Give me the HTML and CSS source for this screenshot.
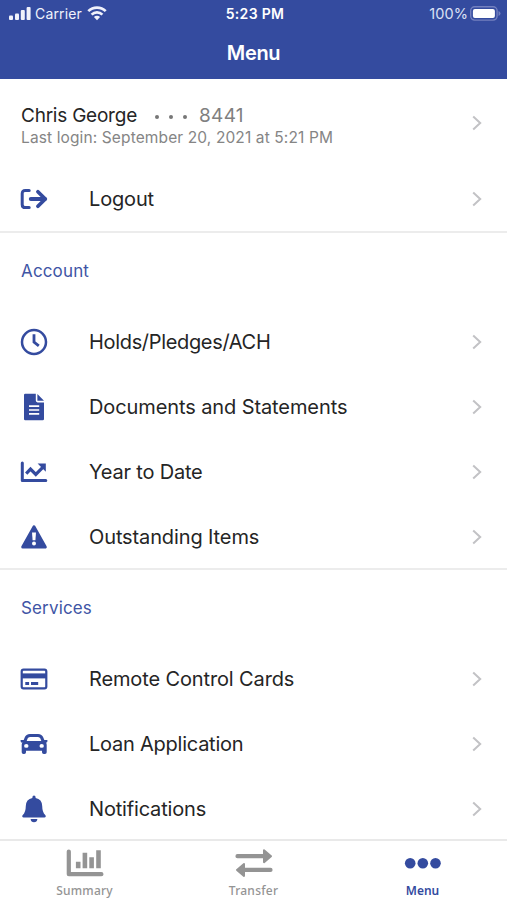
FILE: index.html
```html
<!DOCTYPE html>
<html lang="en">
<head>
<meta charset="utf-8">
<title>Menu</title>
<link rel="stylesheet" href="styles.css">
</head>
<body>
<svg class="defs" width="0" height="0"><defs>
<symbol id="chevron" viewBox="0 0 10 16"><path d="M1.2 1.6 8.2 8l-7 6.4" fill="none" stroke="currentColor" stroke-width="2"/></symbol>
</defs></svg>
<div class="app">
<header class="header">
  <div class="status">
    <div class="status-left">
      <svg width="22" height="14" viewBox="0 0 22 14" fill="currentColor"><rect x="0" y="8.5" width="4" height="4.5" rx="1"/><rect x="6" y="6.5" width="4" height="6.5" rx="1"/><rect x="11.8" y="3" width="4" height="10" rx="1"/><rect x="17.6" y="0" width="4" height="13" rx="1"/></svg>
      <span class="carrier">Carrier</span>
      <svg width="20" height="15" viewBox="0 0 20 15" fill="none" stroke="currentColor" stroke-width="2.7"><path d="M1.3 5.1a12.4 12.4 0 0 1 17.4 0M4.6 8.600a7.7 7.700 0 0 1 10.8 0"/><path d="M10 14.200 6.900 11.100a4.400 4.400 0 0 1 6.200 0z" fill="currentColor" stroke="none"/></svg>
    </div>
    <span class="time">5:23 PM</span>
    <div class="status-right">
      <span class="percent">100%</span>
      <svg width="31" height="15" viewBox="0 0 31 15"><rect x=".7" y=".7" width="26.4" height="13.4" rx="4" fill="none" stroke="#7380bf" stroke-width="1.4"/><rect x="2.900" y="2.900" width="22" height="9" rx="2" fill="#fff"/><path d="M28.5 5v5q2-.8 2-2.5T28.5 5z" fill="#7380bf"/></svg>
    </div>
  </div>
  <h1 class="title">Menu</h1>
</header>
<main class="content">
  <section class="group">
    <div class="user">
      <div class="user-text">
        <div class="user-line"><span class="name">Chris George</span><span class="mask"><i></i><i></i><i></i></span><span class="acct">8441</span></div>
        <div class="login">Last login: September 20, 2021 at 5:21 PM</div>
      </div>
      <svg class="chev"><use href="#chevron"/></svg>
    </div>
    <div class="row">
      <svg class="icon" viewBox="0 0 28 28" fill="none" stroke="currentColor" stroke-width="3" stroke-linecap="round"><path d="M9.2 5.400H5.400Q2.200 5.400 2.200 8.600v10.800q0 3.200 3.200 3.200h3.800" stroke-width="3"/><path d="M10.800 14h14" stroke-width="4"/><path d="m17.900 6.700 7.400 7.300-7.400 7.300" stroke-width="3.700" stroke-linejoin="round"/></svg>
      <span class="label l-logout">Logout</span><svg class="chev"><use href="#chevron"/></svg>
    </div>
  </section>
  <section class="group">
    <h2 class="heading">Account</h2>
    <div class="row">
      <svg class="icon" viewBox="0 0 28 28" fill="none" stroke="currentColor"><circle cx="14" cy="14" r="12" stroke-width="2.5"/><path d="M14 6.200V14l4.800 3.800" stroke-width="2.800"/></svg>
      <span class="label l-holds">Holds/Pledges/ACH</span><svg class="chev"><use href="#chevron"/></svg>
    </div>
    <div class="row">
      <svg class="icon" viewBox="0 0 28 28" fill="currentColor"><path d="M5.200.8H15.800V7.600q0 1.800 1.800 1.800H24V26q0 1.300-1.300 1.300H5.200Q4 27.300 4 26V2Q4 .8 5.200.8z"/><path d="M17.400.9 24 7.800h-6.600z"/><path d="M9 13.200h10.200M9 17h10.200M9 20.800h10.200" stroke="#fff" stroke-width="1.700"/></svg>
      <span class="label l-docs">Documents and Statements</span><svg class="chev"><use href="#chevron"/></svg>
    </div>
    <div class="row">
      <svg class="icon" viewBox="0 0 28 28" fill="none" stroke="currentColor" stroke-width="3.2"><path d="M2.300 5v17.600h23.500" stroke-linejoin="round" stroke-linecap="round" stroke-width="3"/><path d="m6.200 15.600 4.300-4.500 5.300 5.300 7-7"/><path d="M17.600 5.600h8.200v8.200z" fill="currentColor" stroke="none"/></svg>
      <span class="label l-year">Year to Date</span><svg class="chev"><use href="#chevron"/></svg>
    </div>
    <div class="row">
      <svg class="icon" viewBox="0 0 28 28" fill="currentColor"><path d="M14 4 25.200 24H2.800z" stroke="currentColor" stroke-width="3.200" stroke-linejoin="round"/><path d="M12 9.500h4l-.6 7.700h-2.800z" fill="#fff"/><circle cx="14" cy="20.500" r="2" fill="#fff"/></svg>
      <span class="label l-out">Outstanding Items</span><svg class="chev"><use href="#chevron"/></svg>
    </div>
  </section>
  <section class="group">
    <h2 class="heading">Services</h2>
    <div class="row">
      <svg class="icon" viewBox="0 0 28 28"><rect x="1.700" y="4.600" width="24.600" height="18.800" rx="1.800" fill="none" stroke="currentColor" stroke-width="2.200"/><path d="M1.500 10.900h25" stroke="currentColor" stroke-width="5"/><path d="M5.300 18.500h3.800M11 18.500h7.200" stroke="currentColor" stroke-width="2.900"/></svg>
      <span class="label l-cards">Remote Control Cards</span><svg class="chev"><use href="#chevron"/></svg>
    </div>
    <div class="row">
      <svg class="icon" viewBox="0 0 28 28" fill="currentColor"><path fill-rule="evenodd" d="M10 4h8q4 0 5.300 3.500l1 2.600H27q.6 0 .5.700l-.3 1.200q-.2.600-.8.600h-.5q.8.800.8 2.200v7.400q0 1.800-1.800 1.800h-1.100q-1.800 0-1.800-1.800v-1.400H6v1.400Q6 24 4.200 24H3.500q-1.800 0-1.800-1.800v-7.400q0-1.400.8-2.200h-.8q-.6 0-.8-.6l-.4-1.200q-.1-.7.500-.7h2.700l1-2.600Q6 4 10 4zm0 3.100q-1.800 0-2.400 1.500L6.700 11h14.600l-.9-2.400Q19.800 7.100 18 7.100z"/><ellipse cx="6.300" cy="15.900" rx="2.200" ry="1.900" fill="#fff"/><ellipse cx="21.700" cy="15.900" rx="2.200" ry="1.900" fill="#fff"/></svg>
      <span class="label l-loan">Loan Application</span><svg class="chev"><use href="#chevron"/></svg>
    </div>
    <div class="row">
      <svg class="icon" viewBox="0 0 28 28" fill="currentColor"><path d="M14 .6q1.600 0 1.600 1.700v.8q6.400 1.200 6.600 8 .1 6.400 3 8.900.8.900.5 1.700-.3.700-1.300.7H3.600q-1 0-1.300-.7-.3-.8.5-1.700 2.900-2.500 3-8.900.2-6.800 6.600-8v-.8Q12.400.6 14 .6zM10.600 24h6.800q-.4 3.300-3.400 3.300T10.600 24z"/></svg>
      <span class="label l-notif">Notifications</span><svg class="chev"><use href="#chevron"/></svg>
    </div>
  </section>
</main>
<nav class="tabs">
  <div class="tab">
    <svg width="38" height="28" viewBox="0 0 38 28" fill="none" stroke="currentColor"><path d="M2.800 2.500v22.700h32.600" stroke-width="4.200" stroke-linecap="round" stroke-linejoin="round"/><path d="M12.200 12.700v6.500M18.900 3.700v15.500M25.600 8.200v11M32.500 1.200v18" stroke-width="4.600"/></svg>
    <span class="t-sum">Summary</span>
  </div>
  <div class="tab">
    <svg width="38" height="28" viewBox="0 0 38 28"><path d="M2.500 7.200h27M35.500 20.900h-27" stroke="currentColor" stroke-width="4.200" stroke-linecap="round"/><path d="M29 1.200 36 7.200l-7 6zM9 14.900 2 20.900l7 6z" fill="currentColor" stroke="currentColor" stroke-width="2" stroke-linejoin="round"/></svg>
    <span class="t-tran">Transfer</span>
  </div>
  <div class="tab active">
    <svg width="38" height="28" viewBox="0 0 38 28" fill="currentColor"><circle cx="6.200" cy="14.300" r="5.300"/><circle cx="18.800" cy="14.300" r="5.300"/><circle cx="31.500" cy="14.300" r="5.300"/></svg>
    <span class="t-menu">Menu</span>
  </div>
</nav>
</div>
</body>
</html>
```
FILE: styles.css
```css
* { box-sizing: border-box; }
body {
  margin: 0;
  font-family: Inter, "Liberation Sans", sans-serif;
  background: #fff;
  color: #252525;
}
svg { display: block; flex: none; }
.defs { position: absolute; }
.app { height: 900px; display: flex; flex-direction: column; overflow: hidden; }
.header { height: 79px; flex: none; background: #344b9f; color: #fff; }
.status {
  height: 27px;
  padding: 0 6px 0 9px;
  display: grid;
  grid-template-columns: 1fr auto 1fr;
  align-items: center;
  font-size: 14px;
  line-height: 27px;
}
.status-left, .status-right { display: flex; align-items: center; }
.status-left { gap: 4px; color: #f0f2fb; }
.status-left .carrier { width: 48px; letter-spacing: .15px; }
.status-right { justify-content: flex-end; gap: 2px; }
.percent { color: #dce1f5; font-size: 14.5px; letter-spacing: .1px; }
.time { font-weight: 600; letter-spacing: .3px; }
.title { margin: 0; text-align: center; font-size: 20px; line-height: 52px; font-weight: 600; letter-spacing: -.35px; }
.content { flex: 1; min-height: 0; overflow: hidden; }
.group { border-bottom: 2px solid #ececec; }
.group:last-child { border-bottom: 0; }
.user { height: 87px; padding: 0 25px 0 21px; display: flex; align-items: center; }
.user-text { flex: 1; padding-top: 5px; }
.user-line { display: flex; align-items: center; height: 24px; font-size: 19px; white-space: nowrap; }
.name { letter-spacing: -.23px; }
.mask { display: flex; gap: 10px; margin: 2px 12px 0 18px; }
.mask i { width: 4px; height: 4px; border-radius: 50%; background: #777; }
.acct { color: #808080; letter-spacing: .3px; }
.login { font-size: 15.5px; line-height: 19px; letter-spacing: .12px; color: #858585; white-space: nowrap; }
.row { height: 64.8px; padding: 2px 25px 0 20px; display: flex; align-items: center; color: #344b9f; }
.icon { width: 28px; height: 28px; margin-right: 41px; }
.label { flex: 1; font-size: 20px; color: #252525; white-space: nowrap; }
.l-logout { letter-spacing: -.17px; }
.l-holds { letter-spacing: -.33px; }
.l-docs { letter-spacing: -.1px; }
.l-year { letter-spacing: -.2px; }
.l-out { letter-spacing: -.12px; }
.l-cards { letter-spacing: -.13px; }
.l-loan { letter-spacing: -.24px; }
.l-notif { letter-spacing: -.17px; }
.chev { width: 10px; height: 16px; color: #c2c2c5; }
.heading { margin: 0; height: 76px; padding-left: 21px; font-size: 17px; line-height: 76px; font-weight: 400; letter-spacing: .15px; color: #4055a5; }
.tabs { height: 61px; flex: none; border-top: 2px solid #e9e9e9; display: grid; grid-template-columns: repeat(3, 1fr); background: #fff; }
.tab { display: flex; flex-direction: column; align-items: center; padding-top: 8px; color: #949494; font: 500 12px/20px "Noto Sans", sans-serif; }
.tab span { margin-top: 4px; }
.t-sum { letter-spacing: .2px; }
.t-tran { letter-spacing: .25px; }
.active { color: #344b9f; }
.t-menu { font-weight: 600; }
```
